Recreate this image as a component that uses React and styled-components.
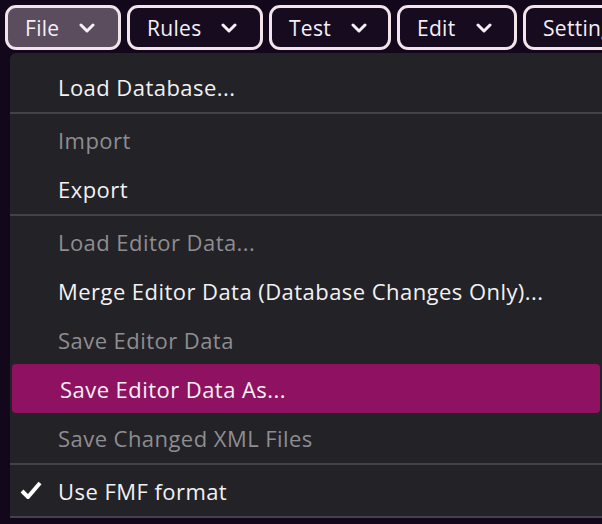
import styled, { createGlobalStyle } from "styled-components";

const Global = createGlobalStyle`
  html, body { margin: 0; background: #13081b; overflow: hidden; }
  body { font-family: "Open Sans", "Noto Sans", sans-serif; }
`;

const Page = styled.div`
  width: 602px;
  height: 524px;
  overflow: hidden;
  position: relative;
`;

const Bar = styled.div`
  display: flex;
  gap: 6px;
  padding: 5px 0 0 5px;
  white-space: nowrap;
`;

const MenuButton = styled.div`
  flex: none;
  box-sizing: border-box;
  width: ${p => p.w}px;
  height: 45px;
  border: 3px solid #f3e4ea;
  border-radius: 11px;
  background: ${p => (p.active ? "#5b4d5e" : "#170b20")};
  color: #f4f0f4;
  font-size: 21px;
  letter-spacing: 0.3px;
  display: flex;
  align-items: center;
  gap: 20px;
  padding-left: 17px;
`;

const Panel = styled.div`
  margin: 3px 0 0 10px;
  background: #232226;
  border-radius: 6px 0 0 0;
  padding-top: 9px;
  font-family: "Open Sans", sans-serif;
`;

const Row = styled.div`
  height: 49px;
  display: flex;
  align-items: center;
  padding-left: 48px;
  position: relative;
  font-size: 22px;
  letter-spacing: 0.45px;
  white-space: nowrap;
  color: ${p => (p.disabled ? "#8e8d91" : "#f2f1f3")};
  background: ${p => (p.selected ? "#8f1161" : "transparent")};
  border-radius: ${p => (p.selected ? "4px" : "0")};
  margin: 0 ${p => (p.selected ? "2px" : "0")};
`;

const Sep = styled.div`
  height: 2px;
  background: #434246;
  margin: 1px 0;
`;

const Check = styled.svg`
  position: absolute;
  left: 10px;
  top: 15px;
`;

const Chevron = () => (
  <svg width="16" height="10" viewBox="0 0 16 10">
    <path d="M2 2l6 6 6-6" stroke="#f4f0f4" strokeWidth="3" fill="none" strokeLinecap="round" strokeLinejoin="round" />
  </svg>
);

const buttons = [
  ["File", 116, true],
  ["Rules", 136],
  ["Test", 122],
  ["Edit", 120],
  ["Settings", 120],
];

export default function App() {
  return (
    <Page>
      <Global />
      <Bar>
        {buttons.map(([label, w, active]) => (
          <MenuButton key={label} w={w} active={active}>
            {label}
            <Chevron />
          </MenuButton>
        ))}
      </Bar>
      <Panel>
        <Row>Load Database...</Row>
        <Sep />
        <Row disabled>Import</Row>
        <Row>Export</Row>
        <Sep />
        <Row disabled>Load Editor Data...</Row>
        <Row>Merge Editor Data (Database Changes Only)...</Row>
        <Row disabled>Save Editor Data</Row>
        <Row selected>Save Editor Data As...</Row>
        <Row disabled>Save Changed XML Files</Row>
        <Sep />
        <Row>
          <Check width="22" height="18" viewBox="0 0 22 18">
            <path d="M2 10l6 6L20 2" stroke="#fff" strokeWidth="4" fill="none" />
          </Check>
          Use FMF format
        </Row>
        <Sep />
      </Panel>
    </Page>
  );
}
